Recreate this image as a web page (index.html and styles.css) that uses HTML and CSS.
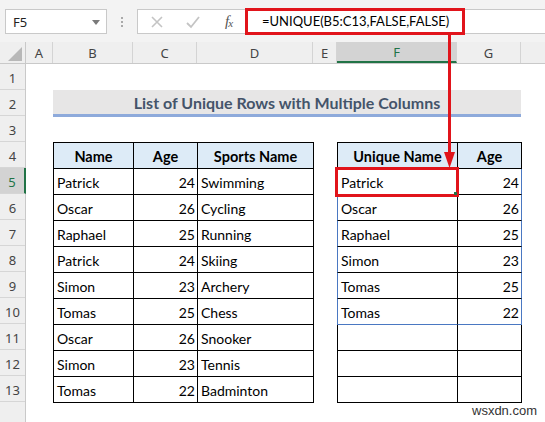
FILE: index.html
```html
<!DOCTYPE html>
<html>
<head>
<meta charset="utf-8">
<link rel="stylesheet" href="styles.css">
</head>
<body>
<div class="app">
  <div class="toolbar">
    <div class="namebox">
      <span class="ref">F5</span>
      <svg class="caret" width="8" height="5" viewBox="0 0 8 5"><polygon points="0,0 8,0 4,5" fill="#7a7a7a"/></svg>
    </div>
    <div class="grip"><i></i><i></i><i></i></div>
    <div class="fbar">
      <svg class="ico" width="14" height="14" viewBox="0 0 14 14"><path d="M2 2 L12 12 M12 2 L2 12" stroke="#c4c4c4" stroke-width="1.6" fill="none"/></svg>
      <svg class="ico" width="16" height="14" viewBox="0 0 16 14"><path d="M2 8 L6 12 L14 2" stroke="#c4c4c4" stroke-width="1.8" fill="none"/></svg>
      <span class="fx">f<sub>x</sub></span>
      <div class="formula">=UNIQUE(B5:C13,FALSE,FALSE)</div>
    </div>
  </div>

  <div class="colhdr">
    <div class="ch corner"><svg width="14" height="14" viewBox="0 0 14 14"><polygon points="14,0 14,14 0,14" fill="#b8b8b8"/></svg></div>
    <div class="ch">A</div>
    <div class="ch">B</div>
    <div class="ch">C</div>
    <div class="ch">D</div>
    <div class="ch">E</div>
    <div class="ch sel">F</div>
    <div class="ch">G</div>
    <div class="ch last"></div>
  </div>

  <div class="body">
    <div class="rowhdr">
      <div class="rn">1</div><div class="rn">2</div><div class="rn">3</div><div class="rn">4</div>
      <div class="rn sel">5</div><div class="rn">6</div><div class="rn">7</div><div class="rn">8</div>
      <div class="rn">9</div><div class="rn">10</div><div class="rn">11</div><div class="rn">12</div>
      <div class="rn">13</div><div class="rn"></div>
    </div>
    <div class="cells">
      <div class="title">List of Unique Rows with Multiple Columns</div>

      <div class="tbl left">
        <div class="tr hd"><div>Name</div><div>Age</div><div>Sports Name</div></div>
        <div class="tr"><div>Patrick</div><div class="num">24</div><div>Swimming</div></div>
        <div class="tr"><div>Oscar</div><div class="num">26</div><div>Cycling</div></div>
        <div class="tr"><div>Raphael</div><div class="num">25</div><div>Running</div></div>
        <div class="tr"><div>Patrick</div><div class="num">24</div><div>Skiing</div></div>
        <div class="tr"><div>Simon</div><div class="num">23</div><div>Archery</div></div>
        <div class="tr"><div>Tomas</div><div class="num">25</div><div>Chess</div></div>
        <div class="tr"><div>Oscar</div><div class="num">26</div><div>Snooker</div></div>
        <div class="tr"><div>Simon</div><div class="num">23</div><div>Tennis</div></div>
        <div class="tr"><div>Tomas</div><div class="num">22</div><div>Badminton</div></div>
      </div>

      <div class="tbl right">
        <div class="tr hd"><div>Unique Name</div><div>Age</div></div>
        <div class="tr sp"><div class="active">Patrick<span class="selbox"><i class="handle"></i></span></div><div class="num">24</div></div>
        <div class="tr sp"><div>Oscar</div><div class="num">26</div></div>
        <div class="tr sp"><div>Raphael</div><div class="num">25</div></div>
        <div class="tr sp"><div>Simon</div><div class="num">23</div></div>
        <div class="tr sp"><div>Tomas</div><div class="num">25</div></div>
        <div class="tr sp end"><div>Tomas</div><div class="num">22</div></div>
        <div class="tr"><div></div><div></div></div>
        <div class="tr"><div></div><div></div></div>
        <div class="tr"><div></div><div></div></div>
      </div>
    </div>
  </div>

  <svg class="arrow" width="14" height="136" viewBox="0 0 14 136">
    <rect x="4" y="0" width="3" height="120" fill="#e1141b"/>
    <polygon points="0,117 11,117 5.5,133" fill="#e1141b"/>
  </svg>
  <div class="mark">wsxdn.com</div>
</div>
</body>
</html>
```

FILE: styles.css
```css
* { box-sizing: border-box; }
html, body { margin: 0; padding: 0; background: #fff; }
.app {
  position: relative;
  width: 545px;
  height: 422px;
  overflow: hidden;
  font-family: Lato, "Open Sans", sans-serif;
}

/* formula bar */
.toolbar {
  height: 42px;
  background: #f3f3f3;
  display: flex;
  align-items: flex-start;
  padding-top: 9px;
  padding-left: 5px;
}
.namebox {
  width: 102px;
  height: 25px;
  background: #fff;
  border: 1px solid #c9c9c9;
  display: flex;
  align-items: center;
  justify-content: space-between;
  padding: 0 6px 0 7px;
  font-family: "Noto Sans", sans-serif;
  font-size: 13px;
  color: #222;
}
.caret { margin-top: 1px; }
.grip {
  width: 30px;
  height: 25px;
  display: flex;
  flex-direction: column;
  align-items: center;
  justify-content: center;
  gap: 2px;
}
.grip i { width: 2px; height: 2px; background: #a9a9a9; display: block; }
.fbar {
  flex: 1;
  height: 25px;
  background: #fff;
  border: 1px solid #c9c9c9;
  border-right: none;
  display: flex;
  align-items: center;
  padding-left: 12px;
  position: relative;
}
.ico { margin-right: 21px; }
.ico + .ico { margin-right: 26px; }
.fx {
  font-family: "Liberation Serif", serif;
  font-style: italic;
  font-size: 15px;
  color: #555;
  margin-left: -2px;
  letter-spacing: -1px;
}
.fx sub { font-size: 11px; vertical-align: 0; position: relative; top: 1px; }
.formula {
  position: absolute;
  left: 107px;
  top: -2px;
  width: 220px;
  height: 27px;
  border: 3px solid #e1141b;
  padding-left: 14px;
  font-size: 13px;
  line-height: 21px;
  color: #000;
  white-space: nowrap;
}

/* column header */
.colhdr {
  display: grid;
  grid-template-columns: 26px 27px 80px 64px 116px 24px 120px 64px 1fr;
  height: 22px;
  background: #efefef;
  border-bottom: 1px solid #c9c9c9;
}
.ch {
  border-right: 1px solid #d4d4d4;
  font-family: "Noto Sans", sans-serif;
  font-size: 13px;
  color: #444;
  display: flex;
  align-items: center;
  justify-content: center;
}
.ch.corner { justify-content: flex-end; align-items: flex-end; padding: 0 3px 2px 0; border-right-color: #c9c9c9; }
.ch.sel { background: #d3d3d3; color: #217346; border-bottom: 2px solid #217346; }
.ch.last { border-right: none; }

/* body */
.body { display: flex; }
.rowhdr {
  width: 26px;
  display: flex;
  flex-direction: column;
  background: #efefef;
  border-right: 1px solid #c9c9c9;
}
.rn {
  height: 26px;
  flex: none;
  border-bottom: 1px solid #d6d6d6;
  font-family: "Noto Sans", sans-serif;
  font-size: 13px;
  color: #444;
  display: flex;
  align-items: center;
  justify-content: center;
  padding-top: 2px;
}
.rn.sel { background: #d3d3d3; color: #217346; border-right: 2px solid #217346; margin-right: -1px; }

.cells {
  flex: 1;
  display: grid;
  grid-template-columns: 27px 80px 64px 116px 24px 120px 64px 1fr;
  grid-template-rows: repeat(14, 26px);
}
.title {
  grid-column: 2 / 8;
  grid-row: 2;
  align-self: start;
  height: 27px;
  background: #e7e6e6;
  border-bottom: 3px solid #8eaadb;
  color: #44546a;
  font-weight: 700;
  font-size: 16px;
  text-align: center;
  line-height: 25px;
}
.tbl { display: flex; flex-direction: column; align-self: start; justify-self: start; border-top: 1px solid #000; }
.tbl.left { grid-column: 2 / 5; grid-row: 4 / 14; }
.tbl.right { grid-column: 6 / 8; grid-row: 4 / 14; }
.tr { display: grid; height: 26px; }
.left .tr { grid-template-columns: 81px 64px 116px; }
.right .tr { grid-template-columns: 121px 64px; }
.tr > div {
  border-right: 1px solid #000;
  border-bottom: 1px solid #000;
  font-size: 14px;
  color: #000;
  padding: 3px 0 0 3px;
  line-height: 22px;
  white-space: nowrap;
  overflow: visible;
}
.tr > div:first-child { border-left: 1px solid #000; }
.tr > div.num { text-align: right; padding: 3px 2px 0 0; }
.tr.hd > div { background: #ddebf7; font-weight: 700; font-size: 14.5px; text-align: center; padding-left: 0; }
.tr.sp > div:first-child { border-left-color: #4a78c2; }
.tr.sp > div:last-child { border-right-color: #4a78c2; }
.tr.sp.end > div { border-bottom-color: #4a78c2; }
.active { position: relative; }
.selbox {
  position: absolute;
  left: -3px;
  top: -2px;
  width: 124px;
  height: 30px;
  border: 3px solid #e1141b;
}
.handle {
  position: absolute;
  right: -1px;
  bottom: -1px;
  width: 3px;
  height: 3px;
  background: #217346;
}

.arrow { position: absolute; left: 444px; top: 35px; }
.mark {
  position: absolute;
  left: 472px;
  top: 403px;
  font-family: "Liberation Sans", Arial, sans-serif;
  font-size: 13px;
  color: #333;
}
```
